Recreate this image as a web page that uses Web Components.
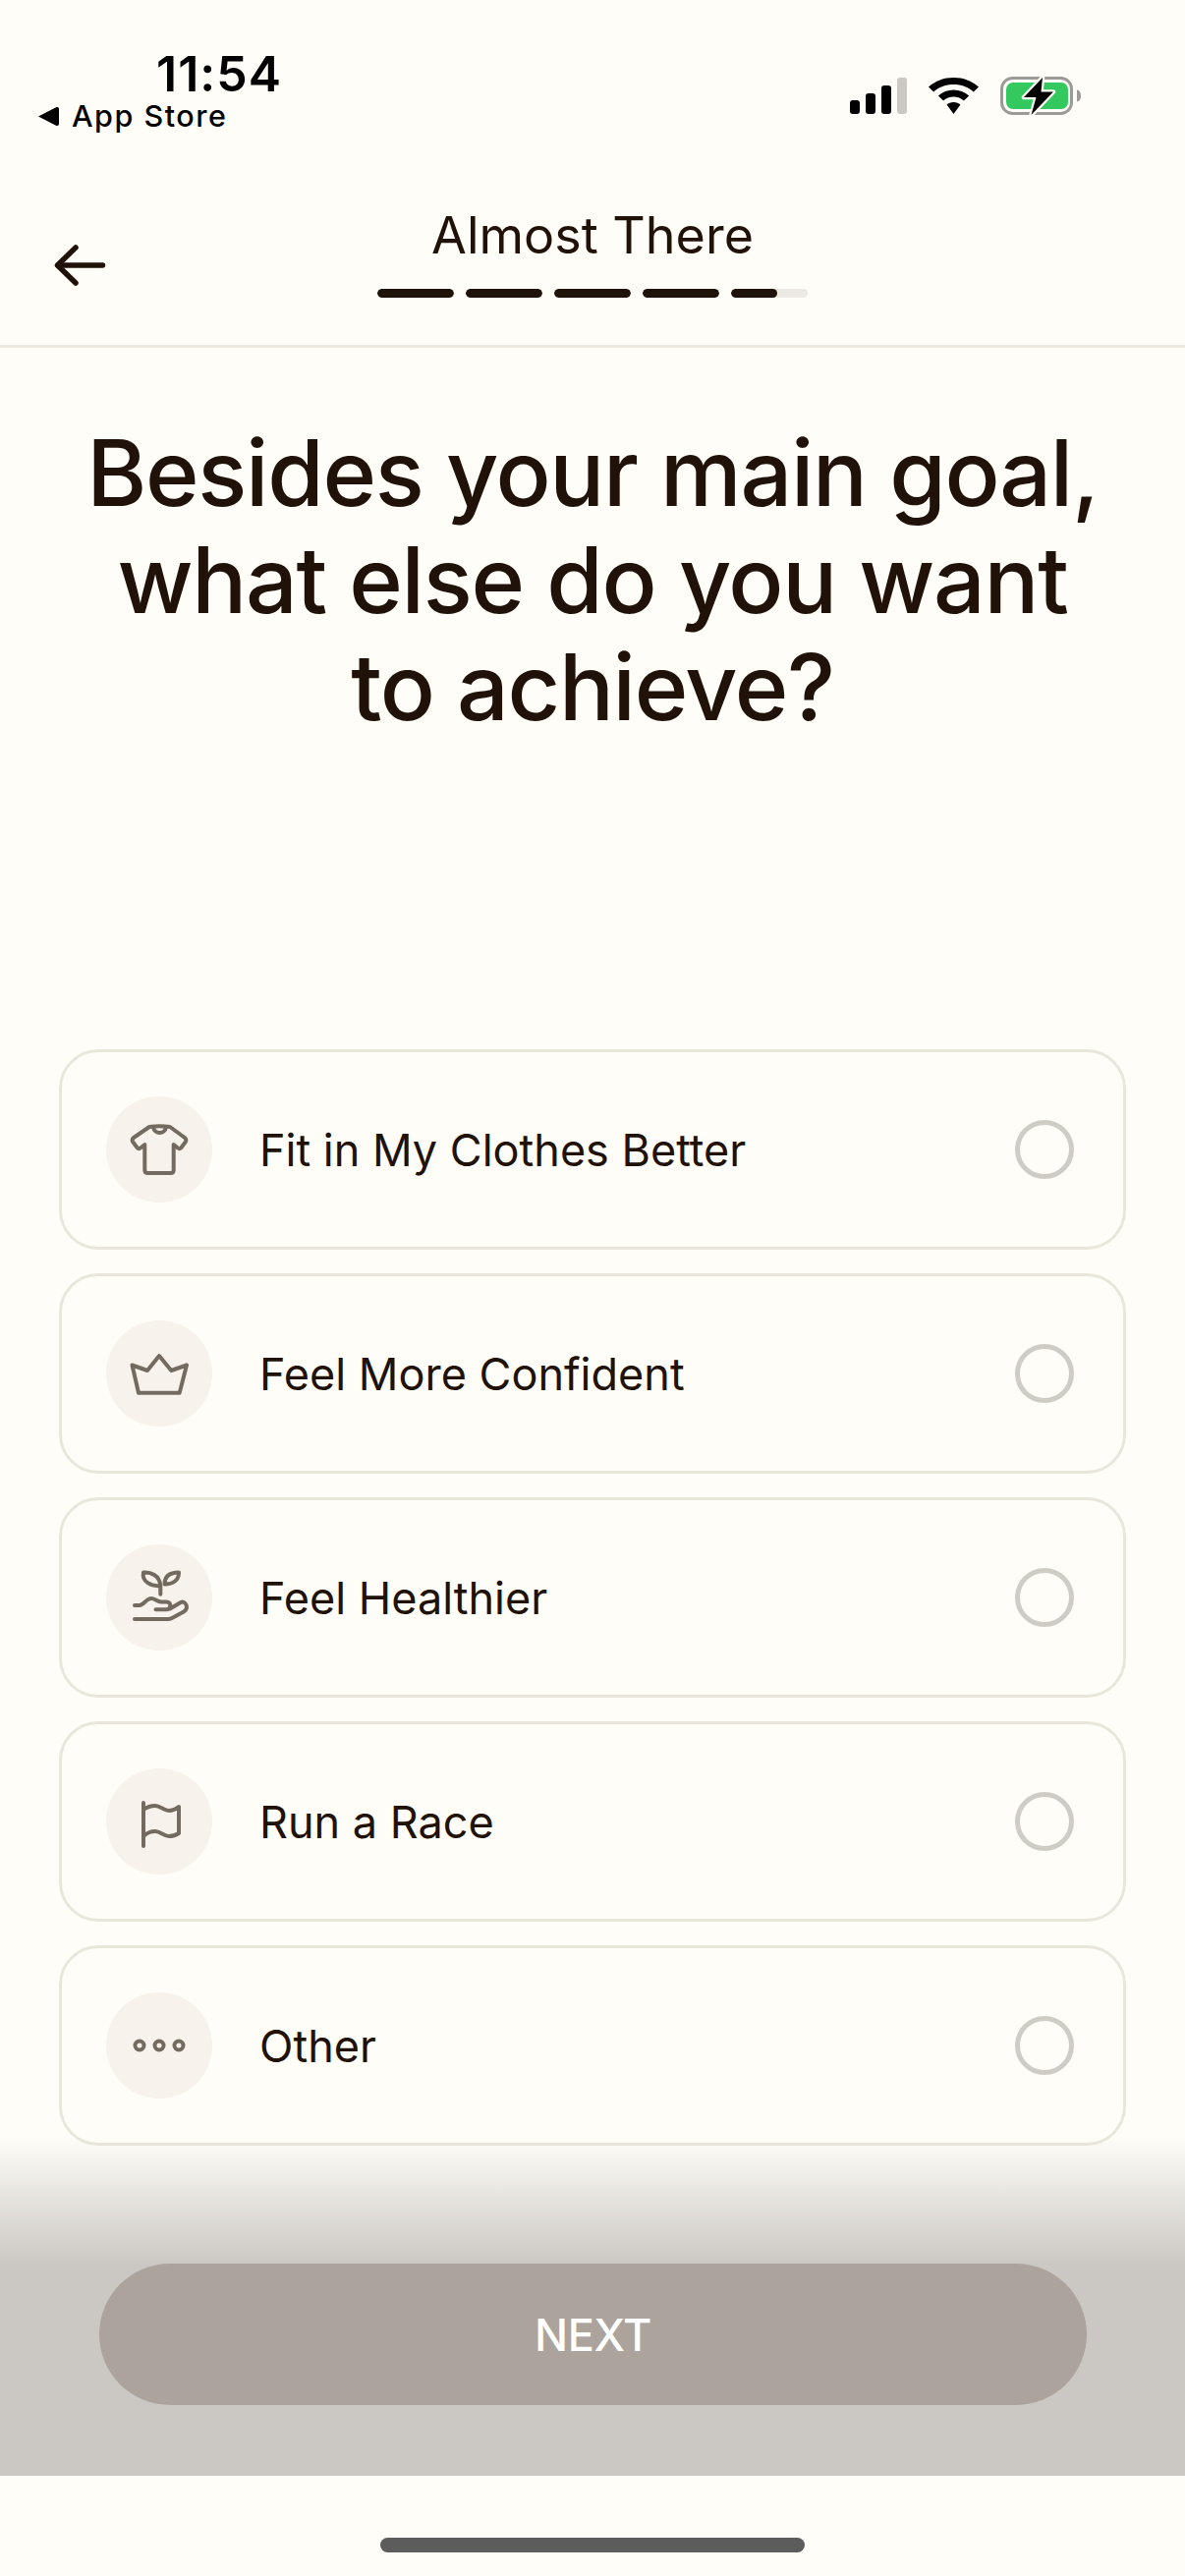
<!DOCTYPE html>
<html>
<head>
<meta charset="utf-8">
<style>
  html, body { margin: 0; padding: 0; background: #fffdf7; }
  body { width: 1206px; height: 2622px; overflow: hidden; font-family: "Inter", "Liberation Sans", sans-serif; color: #201208; }
</style>
</head>
<body>
<survey-screen>
  <status-bar slot="top"></status-bar>
  <survey-header slot="top" title-text="Almost There" steps="5" progress="4.6"></survey-header>
  <h1 slot="question">Besides your main goal, what else do you want to&nbsp;achieve?</h1>
  <option-row label="Fit in My Clothes Better" icon="shirt"></option-row>
  <option-row label="Feel More Confident" icon="crown"></option-row>
  <option-row label="Feel Healthier" icon="plant"></option-row>
  <option-row label="Run a Race" icon="flag"></option-row>
  <option-row label="Other" icon="dots"></option-row>
  <next-bar slot="footer" label="NEXT"></next-bar>
</survey-screen>

<script>
const ICONS = {
    shirt: `<path d="M22 9C30 8 35 8 43 9L58 20Q60 22 59 24L54.500 30Q53 32 51 30.500L46.700 27V53Q46.700 56 43.700 56H20.300Q17.300 56 17.300 53V27L13 30.500Q11 32 9.500 30L5 24Q4 22 6 20Z"/><path d="M26 9C27 17 38 17 39 9"/>`,
    crown: `<path d="M4.500 23.500 20 29 32 14 44.300 29 60 23.500 52.700 51.700H11z"/>`,
    plant: `<path d="M33.300 28.700V20C32.500 9 23 6 16 6.500C14 16 24 21 33.300 20"/><path d="M37.500 18.500C37.500 9 44 6.500 52 6.500C52 14.500 46 18.500 37.500 18.500z"/><path d="M7 40h5c4 0 7-7 12-7 4 0 6 3.500 10 3.500h5c4 0 5 3 4 5-.5 2-2 2.800-4 2.800H28.500"/><path d="M43 43.500 54 37c3-1.500 6 1.500 6 5 0 2-1 3-3 4.500L45 53c-1.500.8-2 1-4 1H7"/>`,
    flag: `<path d="M16 57V13"/><path d="M16 20c4-3 8-4 12-4 5 0 9 5 14 5 4 0 7-1.500 10-4V44c-3 2-6 3-10 3-5 0-9-5-14-5-4 0-8 1-12 5"/>`,
    dots: `<circle cx="12" cy="32" r="4.500"/><circle cx="32" cy="32" r="4.500"/><circle cx="52" cy="32" r="4.500"/>`
};

class SurveyScreen extends HTMLElement {
    constructor() {
        super();
        this.root = this.attachShadow({ mode: 'open' });
        this.root.innerHTML = `
            <style>
                :host { display: flex; flex-direction: column; width: 1206px; height: 2622px; position: relative; }
                .question { padding: 73px 60px 0; height: 714px; box-sizing: border-box; }
                ::slotted(h1) {
                    margin: 0 -20px; text-align: center; font-size: 93px; line-height: 109px;
                    font-weight: 450; letter-spacing: -1.300px;
                }
                .options { display: flex; flex-direction: column; gap: 24px; padding: 0 60px; }
            </style>
            <slot name="top"></slot>
            <div class="question"><slot name="question"></slot></div>
            <div class="options"><slot></slot></div>
            <slot name="footer"></slot>
        `;
    }
}

class StatusBar extends HTMLElement {
    constructor() {
        super();
        this.root = this.attachShadow({ mode: 'open' });
        this.root.innerHTML = `
            <style>
                :host { display: flex; justify-content: space-between; height: 174px; box-sizing: border-box; padding: 48px 0 0 38px; color: #000; font-family: "Inter", "Liberation Sans", sans-serif; }
                .left { display: flex; flex-direction: column; }
                .time { font-size: 50px; line-height: 54px; font-weight: 600; letter-spacing: 1px; margin-left: 121px; }
                .back { display: flex; align-items: center; gap: 13px; margin-top: -3px; font-size: 30.500px; line-height: 38px; font-weight: 500; letter-spacing: 1.500px; }
                .right { display: flex; align-items: flex-start; padding: 31px 106px 0 0; }
                .wifi { margin: 0 22px; }
                svg { display: block; }
            </style>
            <div class="left">
                <div class="time">11:54</div>
                <div class="back">
                    <svg width="22" height="21" viewBox="0 0 22 21"><path d="M1 10.500 19 1.200c1.400-.6 3 0 3 1.500v15.600c0 1.500-1.600 2.100-3 1.500z" fill="#000"/></svg>
                    <span>App Store</span>
                </div>
            </div>
            <div class="right">
                <svg width="58" height="37" viewBox="0 0 58 37">
                    <rect x="0" y="23" width="10" height="14" rx="3" fill="#000"/>
                    <rect x="16" y="16" width="10" height="21" rx="3" fill="#000"/>
                    <rect x="32" y="8" width="10" height="29" rx="3" fill="#000"/>
                    <rect x="48" y="0" width="10" height="37" rx="3" fill="#cbc8c3"/>
                </svg>
                <svg class="wifi" width="51" height="37" viewBox="0 0 44 37" preserveAspectRatio="none">
                    <path d="M22 0C13.500 0 6 3.300 0 9.500l4.500 5C9 9.500 15 7 22 7s13 2.500 17.500 7.500l4.500-5C38 3.300 30.500 0 22 0z" fill="#000"/>
                    <path d="M22 12.500c-5 0-10 2-13.500 6l4.500 5c2.500-2.500 5.500-4 9-4s6.500 1.500 9 4l4.500-5c-3.500-4-8.500-6-13.500-6z" fill="#000"/>
                    <path d="M22 25c-2.500 0-4.500 1-6 2.500L22 37l6-9.500C26.500 26 24.500 25 22 25z" fill="#000"/>
                </svg>
                <svg width="82" height="40" viewBox="0 0 82 40" style="margin-top:-1px">
                    <rect x="1.500" y="1.500" width="71" height="36" rx="11" fill="none" stroke="#9b9a97" stroke-width="3"/>
                    <path d="M78 13.500c3 .5 4 3 4 6s-1 5.500-4 6z" fill="#9b9a97"/>
                    <rect x="6" y="6" width="63" height="27" rx="7" fill="#34c95f"/>
                    <path d="M43 1 24 21h12.500l-5 18L54 15.500H41.500z" fill="#000" stroke="#fffdf7" stroke-width="4.500" stroke-linejoin="round" paint-order="stroke"/>
                </svg>
            </div>
        `;
    }
}

class SurveyHeader extends HTMLElement {
    constructor() {
        super();
        this.root = this.attachShadow({ mode: 'open' });
    }

    connectedCallback() {
        this.render();
    }

    render() {
        const steps = parseInt(this.getAttribute('steps'));
        const progress = parseFloat(this.getAttribute('progress'));
        let bars = '';
        for (let i = 0; i < steps; i++) {
            const fill = Math.max(0, Math.min(1, progress - i)) * 100;
            bars += `<div class="seg"><div class="fill" style="width:${fill}%"></div></div>`;
        }
        this.root.innerHTML = `
            <style>
                :host { display: block; height: 180px; box-sizing: border-box; border-bottom: 3px solid #ece9e3; position: relative; }
                .back { position: absolute; left: 52px; top: 73px; }
                .center { display: flex; flex-direction: column; align-items: center; padding-top: 34px; }
                .title { font-size: 52px; line-height: 64px; font-weight: 400; }
                .bars { display: flex; gap: 12px; margin-top: 22px; }
                .seg { width: 78px; height: 9px; border-radius: 5px; background: #ece9e4; overflow: hidden; }
                .fill { height: 100%; background: #1e1209; border-radius: 5px; }
            </style>
            <svg class="back" width="58" height="46" viewBox="0 0 58 46" fill="none" stroke="#201208" stroke-width="5.500" stroke-linecap="round" stroke-linejoin="round">
                <path d="M7 23h45.500"/><path d="M25 5 6.500 23 25 41"/>
            </svg>
            <div class="center">
                <div class="title">${this.getAttribute('title-text')}</div>
                <div class="bars">${bars}</div>
            </div>
        `;
    }
}

class OptionRow extends HTMLElement {
    constructor() {
        super();
        this.root = this.attachShadow({ mode: 'open' });
    }

    connectedCallback() {
        this.root.innerHTML = `
            <style>
                :host { display: flex; align-items: center; height: 204px; box-sizing: border-box; border: 3px solid #e9e7dc; border-radius: 40px; padding: 0 50px 0 45px; }
                .icon { width: 108px; height: 108px; border-radius: 50%; background: #f7f2ec; display: flex; align-items: center; justify-content: center; flex: none; }
                .label { flex: 1; margin-left: 48px; font-size: 45px; font-weight: 420; white-space: nowrap; }
                .radio { width: 60px; height: 60px; box-sizing: border-box; border: 5px solid #cfccc6; border-radius: 50%; flex: none; }
                svg { display: block; }
            </style>
            <div class="icon">
                <svg width="64" height="64" viewBox="0 0 64 64" fill="none" stroke="#746b60" stroke-width="4" stroke-linecap="round" stroke-linejoin="round">${ICONS[this.getAttribute('icon')]}</svg>
            </div>
            <div class="label">${this.getAttribute('label')}</div>
            <div class="radio"></div>
        `;
    }
}

class NextBar extends HTMLElement {
    constructor() {
        super();
        this.root = this.attachShadow({ mode: 'open' });
    }

    connectedCallback() {
        this.root.innerHTML = `
            <style>
                :host { display: block; position: absolute; left: 0; right: 0; bottom: 0; height: 447px; background: linear-gradient(to bottom, rgba(203,200,195,0) 0, #cbc8c3 130px); }
                .panel { height: 345px; box-sizing: border-box; padding: 129px 100px 0 101px; }
                .btn { height: 144px; border-radius: 72px; background: #aba39c; color: #fff; display: flex; align-items: center; justify-content: center; font-size: 45px; font-weight: 500; letter-spacing: -.3px; }
                .rest { height: 102px; background: #fffdf7; display: flex; justify-content: center; padding-top: 63px; box-sizing: border-box; }
                .home { width: 432px; height: 15px; border-radius: 8px; background: #5c5c5c; }
            </style>
            <div class="panel"><div class="btn">${this.getAttribute('label')}</div></div>
            <div class="rest"><div class="home"></div></div>
        `;
    }
}

customElements.define('survey-screen', SurveyScreen);
customElements.define('status-bar', StatusBar);
customElements.define('survey-header', SurveyHeader);
customElements.define('option-row', OptionRow);
customElements.define('next-bar', NextBar);
</script>
</body>
</html>
